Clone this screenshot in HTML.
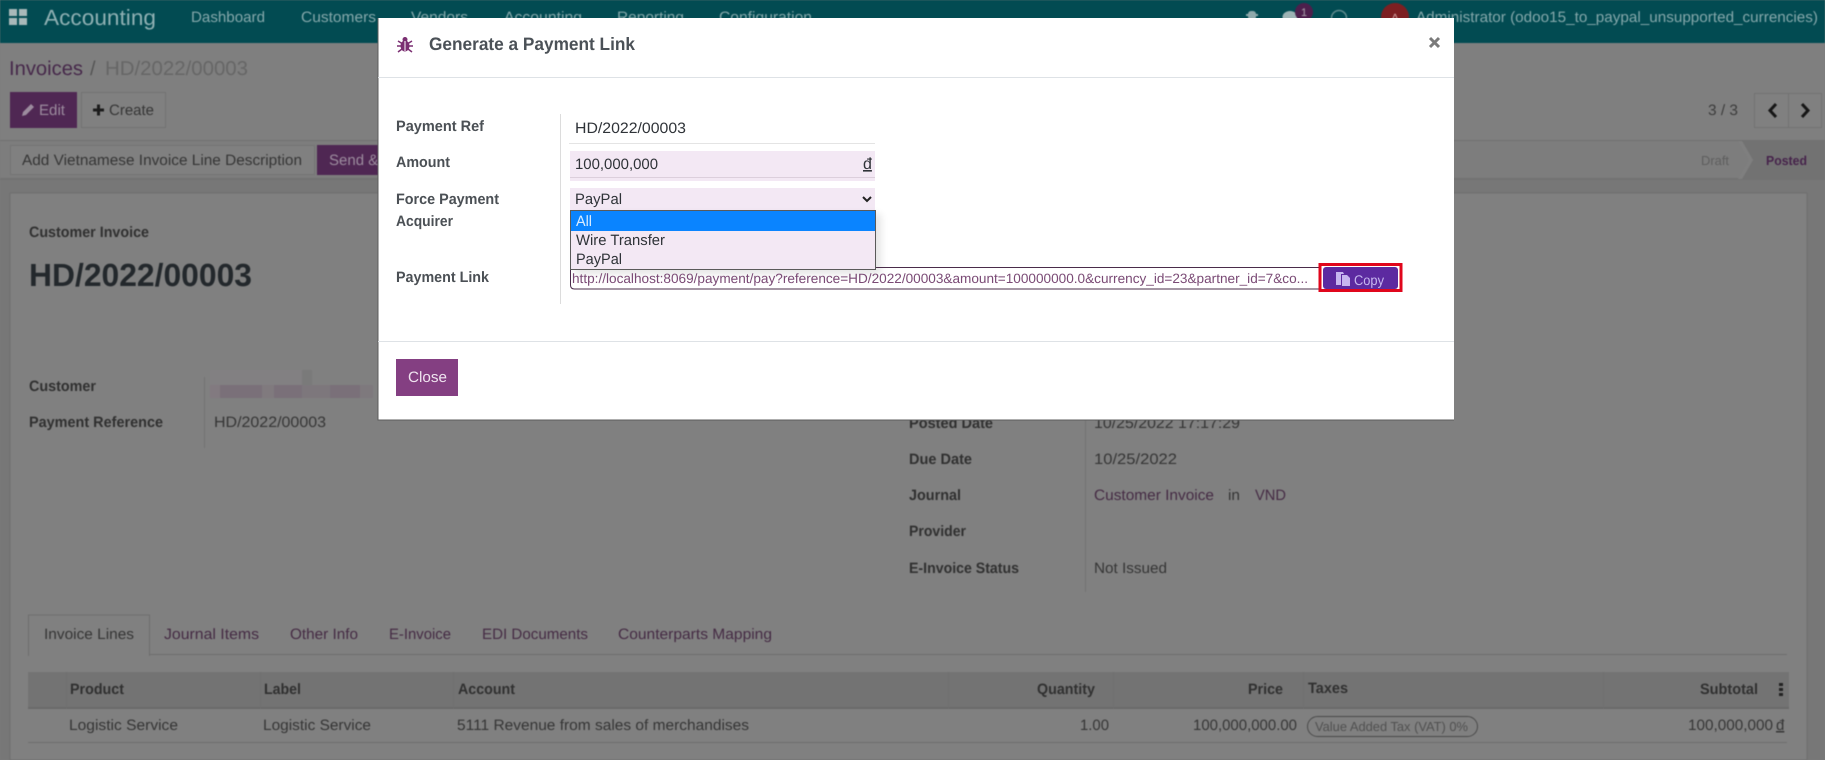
<!DOCTYPE html>
<html><head><meta charset="utf-8"><title>Generate a Payment Link</title>
<style>
html,body{margin:0;padding:0;width:1825px;height:760px;overflow:hidden;background:#7b7b7b}
svg{display:block;position:absolute;left:0;top:0}
text{font-family:"Liberation Sans",sans-serif;font-size:15px;fill:#353535;text-rendering:geometricPrecision}
.b{font-weight:700;fill:#303030}
.m{fill:#452b44}
.n{fill:#85a8ab;font-size:15px}
.l{font-weight:700;fill:#4b5055;font-size:15px}
.v{fill:#2f3338;font-size:15px}
</style></head><body>
<svg width="1825" height="760" viewBox="0 0 1825 760" xmlns="http://www.w3.org/2000/svg">
<g style="filter:blur(.45px)">
<rect width="1825" height="760" fill="#777"/>
<rect width="1825" height="43" fill="#024b52"/>
<rect y="43" width="1825" height="98" fill="#7f7f7f"/>
<rect y="140" width="1825" height="1" fill="#707070"/>
<rect y="141" width="1825" height="38" fill="#7d7d7d"/>
<rect y="178" width="1825" height="2" fill="#727272"/>
<rect x="10" y="193" width="1797" height="567" fill="#808080" stroke="#6e6e6e"/>
<!-- navbar -->
<g fill="#a9b9ba"><rect x="9" y="9" width="8" height="7"/><rect x="19" y="9" width="8" height="7"/><rect x="9" y="18" width="8" height="7"/><rect x="19" y="18" width="8" height="7"/></g>
<text x="44" y="25" textLength="112" lengthAdjust="spacingAndGlyphs" style="font-size:22px;fill:#8fb0b3">Accounting</text>
<text class="n" x="191" y="22" textLength="74" lengthAdjust="spacingAndGlyphs">Dashboard</text>
<text class="n" x="301" y="22" textLength="75" lengthAdjust="spacingAndGlyphs">Customers</text>
<text class="n" x="411" y="22" textLength="57" lengthAdjust="spacingAndGlyphs">Vendors</text>
<text class="n" x="504" y="22" textLength="78" lengthAdjust="spacingAndGlyphs">Accounting</text>
<text class="n" x="617" y="22" textLength="67" lengthAdjust="spacingAndGlyphs">Reporting</text>
<text class="n" x="719" y="22" textLength="93" lengthAdjust="spacingAndGlyphs">Configuration</text>
<rect x="1248" y="11" width="8" height="9" rx="3" fill="#8fa9ab"/>
<rect x="1246" y="14" width="12" height="2" fill="#8fa9ab"/>
<ellipse cx="1290" cy="17" rx="7.500" ry="6" fill="#9db3b4"/>
<circle cx="1304" cy="12" r="9" fill="#4d1f4c"/>
<text x="1301" y="16" style="font-size:11px;fill:#a9a0aa">1</text>
<circle cx="1339" cy="18" r="7.500" fill="none" stroke="#5f8a8d" stroke-width="1.500"/>
<circle cx="1395" cy="17" r="14" fill="#7c1f22"/>
<text x="1391" y="22" style="font-size:12px;fill:#c99">A</text>
<text class="n" x="1416" y="22" textLength="402" lengthAdjust="spacingAndGlyphs">Administrator (odoo15_to_paypal_unsupported_currencies)</text>
<!-- breadcrumb -->
<text x="9" y="75" textLength="74" lengthAdjust="spacingAndGlyphs" style="font-size:20px;fill:#46284a">Invoices</text>
<text x="90" y="75" style="font-size:20px;fill:#555">/</text>
<text x="105" y="75" textLength="143" lengthAdjust="spacingAndGlyphs" style="font-size:20px;fill:#666">HD/2022/00003</text>
<!-- buttons -->
<rect x="10" y="92" width="67" height="36" fill="#4f2753"/>
<path d="M22 116l1-4 8-8 3 3-8 8z" fill="#9c8c9e"/>
<text x="39" y="115" textLength="26" lengthAdjust="spacingAndGlyphs" style="fill:#9c8c9e">Edit</text>
<rect x="81.500" y="92.500" width="84" height="35" fill="#808080" stroke="#727272"/>
<path d="M93 110h11M98.500 104.500v11" stroke="#1c1c1c" stroke-width="3"/>
<text x="109" y="115" textLength="45" lengthAdjust="spacingAndGlyphs">Create</text>
<text x="1708" y="115" textLength="30" lengthAdjust="spacingAndGlyphs" style="fill:#3c3c3c">3 / 3</text>
<rect x="1754.500" y="93.500" width="34" height="34" fill="#808080" stroke="#727272"/>
<rect x="1788.500" y="93.500" width="33" height="34" fill="#808080" stroke="#727272"/>
<path d="M1776 104l-6 6.500 6 6.500M1802 104l6 6.500-6 6.500" fill="none" stroke="#151515" stroke-width="3"/>
<!-- status bar -->
<rect x="10.500" y="145.500" width="304" height="29" fill="#808080" stroke="#747474"/>
<text x="22" y="165" textLength="280" lengthAdjust="spacingAndGlyphs">Add Vietnamese Invoice Line Description</text>
<rect x="317" y="145" width="70" height="30" fill="#4f2753"/>
<text x="329" y="165" style="fill:#9c8c9e">Send &amp;</text>
<path d="M1825 141v38h-83l11-19-11-19z" fill="#727272"/>
<path d="M1738 141h4l11 19-11 19h-4l11-19z" fill="#7f7f7f"/>
<text x="1701" y="165" textLength="28" lengthAdjust="spacingAndGlyphs" style="font-size:13px;fill:#5e5e5e">Draft</text>
<text class="b" x="1766" y="165" textLength="41" lengthAdjust="spacingAndGlyphs" style="font-size:13px;fill:#46234b">Posted</text>
<!-- sheet -->
<text class="b" x="29" y="237" textLength="120" lengthAdjust="spacingAndGlyphs" style="font-size:15px">Customer Invoice</text>
<text x="29" y="286" textLength="223" lengthAdjust="spacingAndGlyphs" style="font-size:32px;font-weight:700;fill:#23282c">HD/2022/00003</text>
<text class="b" x="29" y="391" textLength="67" lengthAdjust="spacingAndGlyphs">Customer</text>
<text class="b" x="29" y="427" textLength="134" lengthAdjust="spacingAndGlyphs">Payment Reference</text>
<rect x="204" y="377" width="1" height="71" fill="#727272"/>
<g>
<rect x="210" y="370" width="102" height="15" fill="#828082"/>
<rect x="210" y="385" width="163" height="13" fill="#7a7079"/>
<rect x="210" y="385" width="10" height="13" fill="#827a80"/>
<rect x="262" y="385" width="12" height="13" fill="#807a7e"/>
<rect x="302" y="385" width="28" height="13" fill="#7d777c"/>
<rect x="360" y="385" width="13" height="13" fill="#7e797d"/>
<rect x="302" y="370" width="10" height="15" fill="#7a7a7a"/>
</g>
<text x="214" y="427" textLength="112" lengthAdjust="spacingAndGlyphs">HD/2022/00003</text>
<rect x="1085" y="400" width="1" height="192" fill="#727272"/>
<text class="b" x="909" y="428" textLength="84" lengthAdjust="spacingAndGlyphs">Posted Date</text>
<text x="1094" y="428" textLength="146" lengthAdjust="spacingAndGlyphs">10/25/2022 17:17:29</text>
<text class="b" x="909" y="464" textLength="63" lengthAdjust="spacingAndGlyphs">Due Date</text>
<text x="1094" y="464" textLength="83" lengthAdjust="spacingAndGlyphs">10/25/2022</text>
<text class="b" x="909" y="500" textLength="52" lengthAdjust="spacingAndGlyphs">Journal</text>
<text class="m" x="1094" y="500" textLength="120" lengthAdjust="spacingAndGlyphs">Customer Invoice</text>
<text x="1228" y="500" textLength="12" lengthAdjust="spacingAndGlyphs">in</text>
<text class="m" x="1255" y="500" textLength="31" lengthAdjust="spacingAndGlyphs">VND</text>
<text class="b" x="909" y="536" textLength="57" lengthAdjust="spacingAndGlyphs">Provider</text>
<text class="b" x="909" y="573" textLength="110" lengthAdjust="spacingAndGlyphs">E-Invoice Status</text>
<text x="1094" y="573" textLength="73" lengthAdjust="spacingAndGlyphs">Not Issued</text>
<!-- tabs -->
<rect x="28" y="654" width="1759" height="1" fill="#6e6e6e"/>
<path d="M28.500 656v-41h121v41" fill="#808080" stroke="#6e6e6e"/>
<text x="44" y="639" textLength="90" lengthAdjust="spacingAndGlyphs">Invoice Lines</text>
<text class="m" x="164" y="639" textLength="95" lengthAdjust="spacingAndGlyphs">Journal Items</text>
<text class="m" x="290" y="639" textLength="68" lengthAdjust="spacingAndGlyphs">Other Info</text>
<text class="m" x="389" y="639" textLength="62" lengthAdjust="spacingAndGlyphs">E-Invoice</text>
<text class="m" x="482" y="639" textLength="106" lengthAdjust="spacingAndGlyphs">EDI Documents</text>
<text class="m" x="618" y="639" textLength="154" lengthAdjust="spacingAndGlyphs">Counterparts Mapping</text>
<!-- table -->
<rect x="28" y="672" width="1761" height="36" fill="#737373"/>
<rect x="28" y="707" width="1761" height="2" fill="#6a6a6a"/>
<g fill="#6f6f6f"><rect x="66" y="672" width="1" height="36"/><rect x="260" y="672" width="1" height="36"/><rect x="453" y="672" width="1" height="36"/><rect x="948" y="672" width="1" height="36"/><rect x="1113" y="672" width="1" height="36"/><rect x="1303" y="672" width="1" height="36"/><rect x="1603" y="672" width="1" height="36"/></g>
<text class="b" x="70" y="694" textLength="54" lengthAdjust="spacingAndGlyphs">Product</text>
<text class="b" x="264" y="694" textLength="37" lengthAdjust="spacingAndGlyphs">Label</text>
<text class="b" x="458" y="694" textLength="57" lengthAdjust="spacingAndGlyphs">Account</text>
<text class="b" x="1037" y="694" textLength="58" lengthAdjust="spacingAndGlyphs">Quantity</text>
<text class="b" x="1248" y="694" textLength="35" lengthAdjust="spacingAndGlyphs">Price</text>
<text class="b" x="1308" y="693" textLength="40" lengthAdjust="spacingAndGlyphs">Taxes</text>
<text class="b" x="1700" y="694" textLength="58" lengthAdjust="spacingAndGlyphs">Subtotal</text>
<g fill="#222"><rect x="1779" y="683" width="4" height="3"/><rect x="1779" y="688" width="4" height="3"/><rect x="1779" y="693" width="4" height="3"/></g>
<text x="69" y="730" textLength="109" lengthAdjust="spacingAndGlyphs">Logistic Service</text>
<text x="263" y="730" textLength="108" lengthAdjust="spacingAndGlyphs">Logistic Service</text>
<text x="457" y="730" textLength="292" lengthAdjust="spacingAndGlyphs">5111 Revenue from sales of merchandises</text>
<text x="1080" y="730" textLength="29" lengthAdjust="spacingAndGlyphs">1.00</text>
<text x="1193" y="730" textLength="104" lengthAdjust="spacingAndGlyphs">100,000,000.00</text>
<rect x="1307.500" y="716.500" width="170" height="20" rx="10" fill="none" stroke="#4a4a4a"/>
<text x="1315" y="731" textLength="153" lengthAdjust="spacingAndGlyphs" style="font-size:13px;fill:#505050">Value Added Tax (VAT) 0%</text>
<text x="1688" y="730" textLength="85" lengthAdjust="spacingAndGlyphs">100,000,000</text>
<text x="1776" y="730" style="text-decoration:underline">đ</text>
<rect x="28" y="742" width="1759" height="1" fill="#6e6e6e"/>
</g>
<!-- modal -->
<g style="filter:blur(.3px)">
<rect x="378" y="18" width="1076" height="402" fill="#fff"/>
<path d="M378 18v402h1076" fill="none" stroke="#5c5c5c" stroke-width="1"/>
<g fill="#7b2f72"><ellipse cx="405" cy="46" rx="4.500" ry="5.500"/><circle cx="405" cy="39.500" r="2.500"/><path d="M398 41l4 2.500M412 41l-4 2.500M397 46h5M413 46h-5M398 52l4-3M412 52l-4-3" stroke="#7b2f72" stroke-width="1.500"/></g>
<rect x="404.500" y="41" width="1" height="10" fill="#fff"/>
<text x="429" y="50" textLength="206" lengthAdjust="spacingAndGlyphs" style="font-size:18px;font-weight:700;fill:#4b5157">Generate a Payment Link</text>
<path d="M1430 38l9 9M1439 38l-9 9" stroke="#7a7a7a" stroke-width="3"/>
<rect x="378" y="77" width="1076" height="1" fill="#dee2e6"/>
<rect x="560" y="114" width="1" height="190" fill="#dcdcdc"/>
<text class="l" x="396" y="131" textLength="88" lengthAdjust="spacingAndGlyphs">Payment Ref</text>
<text class="l" x="396" y="167" textLength="54" lengthAdjust="spacingAndGlyphs">Amount</text>
<text class="l" x="396" y="204" textLength="103" lengthAdjust="spacingAndGlyphs">Force Payment</text>
<text class="l" x="396" y="226" textLength="57" lengthAdjust="spacingAndGlyphs">Acquirer</text>
<text class="l" x="396" y="282" textLength="93" lengthAdjust="spacingAndGlyphs">Payment Link</text>
<text class="v" x="575" y="133" textLength="111" lengthAdjust="spacingAndGlyphs">HD/2022/00003</text>
<rect x="569" y="143" width="306" height="1" fill="#e4e4e4"/>
<rect x="570" y="151" width="305" height="30" fill="#f3e8f4"/>
<rect x="570" y="177" width="305" height="1" fill="#dccfdc"/>
<text class="v" x="575" y="169" textLength="83" lengthAdjust="spacingAndGlyphs">100,000,000</text>
<text class="v" x="863" y="169" style="text-decoration:underline;font-size:16px">đ</text>
<rect x="570" y="188" width="305" height="23" fill="#f3e8f4"/>
<text class="v" x="575" y="204" textLength="47" lengthAdjust="spacingAndGlyphs">PayPal</text>
<path d="M863 197l4 4 4-4" fill="none" stroke="#222" stroke-width="2"/>
<rect x="575" y="214" width="306" height="60" fill="#000" opacity=".1" style="filter:blur(4px)"/>
<rect x="570.500" y="210.500" width="305" height="59" fill="#f3e8f4" stroke="#5a5a5a"/>
<rect x="571" y="211" width="304" height="20" fill="#0a84ff"/>
<text x="576" y="226" textLength="16" lengthAdjust="spacingAndGlyphs" style="fill:#d9ecff">All</text>
<text class="v" x="576" y="245" textLength="89" lengthAdjust="spacingAndGlyphs">Wire Transfer</text>
<text class="v" x="576" y="264" textLength="46" lengthAdjust="spacingAndGlyphs">PayPal</text>
<path d="M1319 267.500H876M570.500 270v15q0 4 4 4H1319" fill="none" stroke="#4a2c4a"/>
<text x="572" y="283" textLength="736" lengthAdjust="spacingAndGlyphs" style="font-size:13.500px;fill:#7a4a75">http://localhost:8069/payment/pay?reference=HD/2022/00003&amp;amount=100000000.0&amp;currency_id=23&amp;partner_id=7&amp;co...</text>
<rect x="1320" y="264.500" width="81" height="26" fill="none" stroke="#e0061c" stroke-width="3"/>
<rect x="1323" y="267" width="75" height="22" rx="3" fill="#5c2aa0"/>
<path d="M1336 272h7l1 2h-3v11h-5z" fill="#c6b6ef"/>
<path d="M1342 275h5l3 3v8h-8z" fill="#c6b6ef"/>
<text x="1354" y="285" textLength="30" lengthAdjust="spacingAndGlyphs" style="font-size:14px;fill:#c6b6ef">Copy</text>
<rect x="378" y="341" width="1076" height="1" fill="#dee2e6"/>
<rect x="396" y="359" width="62" height="37" fill="#843f82"/>
<text x="408" y="382" textLength="39" lengthAdjust="spacingAndGlyphs" style="font-size:15px;fill:#efe3ef">Close</text>
</g>
</svg>
</body></html>
